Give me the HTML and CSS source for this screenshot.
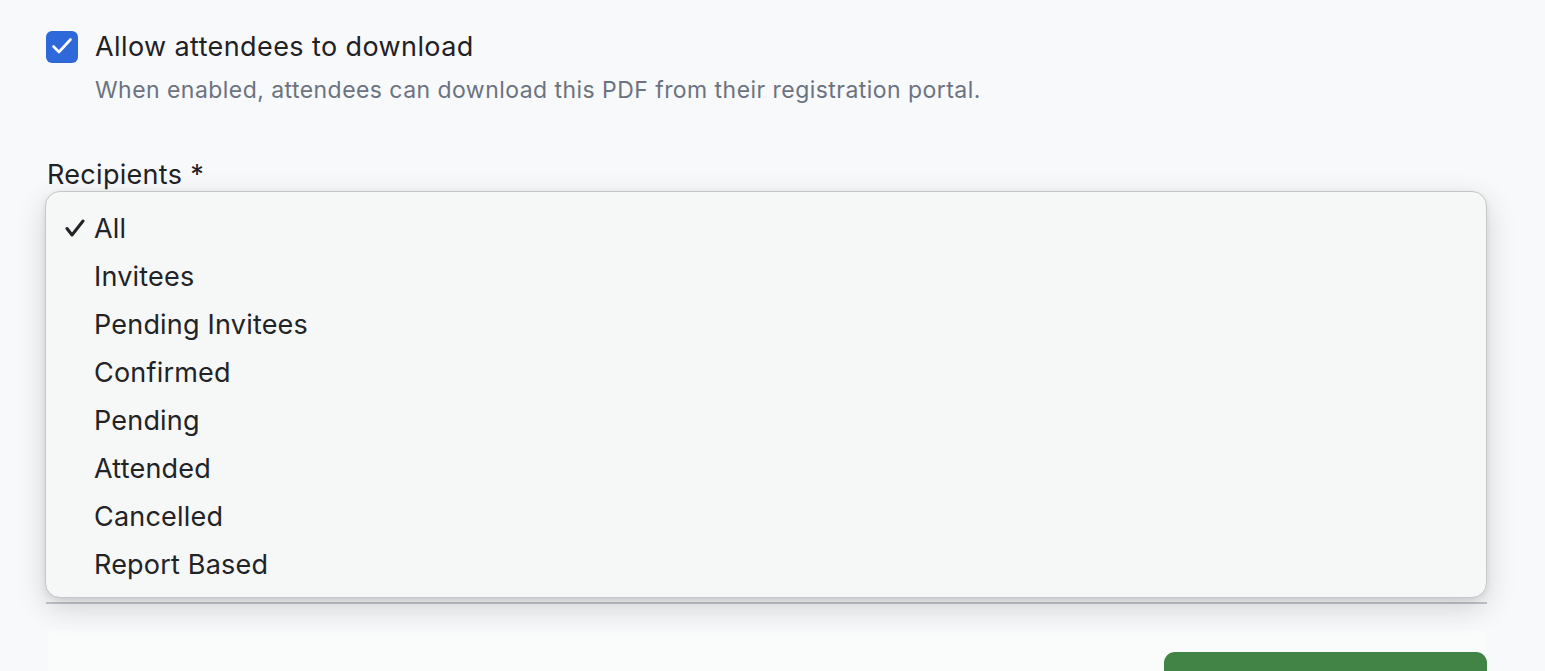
FILE: index.html
```html
<!DOCTYPE html>
<html>
<head>
<meta charset="utf-8">
<link rel="stylesheet" href="styles.css">
</head>
<body>
<div class="page">
  <div class="check-row">
    <span class="checkbox">
      <svg viewBox="0 0 32 32" width="32" height="32"><path d="M7.5 15.5l5.5 5.5L24.5 8.5" fill="none" stroke="#fff" stroke-width="2.6" stroke-linecap="round" stroke-linejoin="round"/></svg>
    </span>
    <span class="check-label">Allow attendees to download</span>
  </div>
  <p class="desc">When enabled, attendees can download this PDF from their registration portal.</p>

  <div class="field">
    <div class="field-label">Recipients *</div>
    <div class="select-wrap">
      <div class="select-box"></div>
      <div class="divider"></div>
      <ul class="menu">
        <li class="item selected"><svg class="tick" viewBox="0 0 20 18" width="20" height="18"><path d="M2 9.5l5 6.5L18 2" fill="none" stroke="#222326" stroke-width="3" stroke-linecap="round" stroke-linejoin="round"/></svg>All</li>
        <li class="item">Invitees</li>
        <li class="item">Pending Invitees</li>
        <li class="item">Confirmed</li>
        <li class="item">Pending</li>
        <li class="item">Attended</li>
        <li class="item">Cancelled</li>
        <li class="item">Report Based</li>
      </ul>
    </div>
  </div>

  <div class="footer">
    <button class="save-btn"></button>
  </div>
</div>
</body>
</html>
```

FILE: styles.css
```css
html, body {
  margin: 0;
  padding: 0;
  background: #f8f9fb;
  font-family: Inter, "Noto Sans", sans-serif;
  color: #1f2125;
  overflow: hidden;
}

.page {
  padding: 31px 58px 0 46px;
  width: 1441px;
}

.check-row {
  display: flex;
  align-items: center;
  gap: 17px;
  height: 32px;
}

.checkbox {
  width: 32px;
  height: 32px;
  border-radius: 6px;
  background: #2d69d9;
  display: flex;
  align-items: center;
  justify-content: center;
  flex: none;
}

.check-label {
  font-size: 27px;
  font-weight: 400;
  letter-spacing: 0.4px;
  color: #1f2125;
  position: relative;
  top: -1px;
}

.desc {
  margin: 12px 0 0 49px;
  font-size: 23px;
  line-height: 30px;
  letter-spacing: 0.45px;
  color: #6b7380;
}

.field {
  margin-top: 53px;
}

.field-label {
  font-size: 27px;
  line-height: 34px;
  letter-spacing: 0.3px;
  color: #1f2125;
  padding-left: 1px;
}

.select-wrap {
  position: relative;
  height: 414px;
}

.select-box {
  margin-top: 8px;
  height: 50px;
  border-radius: 10px;
  border: 2px solid #2d69d9;
  background: #fff;
}

.divider {
  position: absolute;
  left: 0;
  right: 0;
  top: 402px;
  height: 2px;
  background: #c3c7ce;
}

.menu {
  position: absolute;
  left: -1px;
  top: -9px;
  width: 1442px;
  height: 407px;
  margin: 0;
  padding: 13px 0 0;
  list-style: none;
  box-sizing: border-box;
  background: #f6f7f7;
  border: 1px solid #c4c6c9;
  border-radius: 15px;
  box-shadow: 0 10px 30px rgba(0, 0, 0, 0.16), 0 2px 6px rgba(0, 0, 0, 0.08);
}

.item {
  position: relative;
  height: 48px;
  line-height: 48px;
  padding-left: 48px;
  font-size: 27px;
  letter-spacing: 0.2px;
  color: #222326;
}

.tick {
  position: absolute;
  left: 19px;
  top: 14px;
}

.footer {
  margin-top: 16px;
  margin-left: 2px;
  height: 60px;
  background: #fafbfb;
  display: flex;
  justify-content: flex-end;
  padding-top: 22px;
}

.save-btn {
  width: 323px;
  height: 60px;
  border: none;
  border-radius: 11px;
  background: #428346;
}
```
